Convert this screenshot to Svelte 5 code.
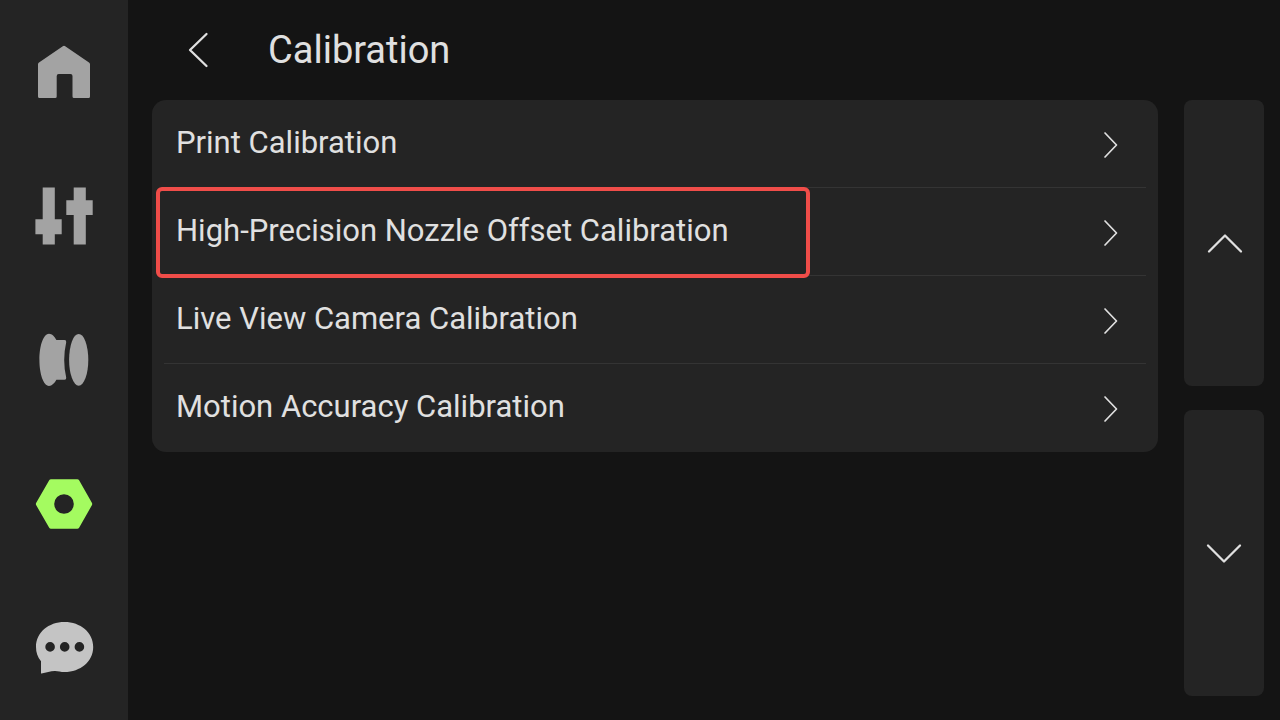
<script lang="ts">
  type Tab = 'home' | 'control' | 'filament' | 'settings' | 'assistant';

  const tabs: { id: Tab; label: string }[] = [
    { id: 'home', label: 'Home' },
    { id: 'control', label: 'Control' },
    { id: 'filament', label: 'Filament' },
    { id: 'settings', label: 'Settings' },
    { id: 'assistant', label: 'Assistant' }
  ];

  const items = [
    'Print Calibration',
    'High-Precision Nozzle Offset Calibration',
    'Live View Camera Calibration',
    'Motion Accuracy Calibration'
  ];

  let activeTab = $state<Tab>('settings');
  let selected = $state(1);
  let list: HTMLElement;

  function scrollList(direction: number) {
    list.scrollBy({ top: direction * 88, behavior: 'smooth' });
  }
</script>

<div class="screen">
  <nav class="sidebar">
    {#each tabs as tab}
      <button
        class="tab {tab.id}"
        class:active={activeTab === tab.id}
        aria-label={tab.label}
        onclick={() => (activeTab = tab.id)}
      >
        <svg viewBox="0 0 64 64" width="64" height="64" fill="currentColor">
          {#if tab.id === 'home'}
            <path d="M30.8 6.2Q32 5.3 33.2 6.2L57 22.6Q58 23.3 58 24.5V56.500Q58 58 56.500 58H42Q40.5 58 40.5 56.500V36Q40.5 34 38.5 34H26.7Q24.7 34 24.7 36V56.500Q24.7 58 23.200 58H7.500Q6 58 6 56.500V24.5Q6 23.3 7 22.6Z" />
          {:else if tab.id === 'control'}
            <path d="M10.7 3.4H22.8V35.2H29.7V50.2H22.8V60.6H10.7V50.2H3.4V35.2H10.7Z" />
            <path d="M41.7 3.4H53.8V16.2H60.7V31H53.8V60.6H41.7V31H34.3V16.2H41.7Z" />
          {:else if tab.id === 'filament'}
            <path d="M17 5.7C20 5.7 22.5 8.5 24.4 12H32.5Q34.6 12 34.2 14.2Q30.2 31.8 34.2 49.6Q34.6 51.8 32.5 51.8H24.4C22.5 55.2 20 57.9 17 57.9C11.5 57.9 7.4 46 7.4 31.8C7.4 17.6 11.5 5.7 17 5.7Z" />
            <ellipse cx="46.7" cy="31.8" rx="9.6" ry="25.9" />
          {:else if tab.id === 'settings'}
            <path
              fill-rule="evenodd"
              d="M19 7.2H45.3Q46.5 7.2 47.1 8.2L60 31Q60.4 32 60 33L47.1 55.8Q46.5 56.8 45.3 56.8H19Q17.8 56.8 17.2 55.8L4.1 33Q3.6 32 4.1 31L17.2 8.2Q17.8 7.2 19 7.2ZM32 22.2A9.8 9.8 0 1 0 32 41.8A9.8 9.8 0 1 0 32 22.2Z"
            />
          {:else}
            <path
              fill-rule="evenodd"
              d="M32.5 6C48.5 6 61.2 16.5 61.2 31C61.2 45.5 48.5 56 32.5 56C28.5 56 26 54.8 22.7 54.9C18.5 55 14 56.5 9.5 57.6Q9 57.7 9 57.2V45.3C5.5 41 4 36.5 4 31C4 16.5 16.5 6 32.5 6ZM18.1 26.1A4.8 4.8 0 1 0 18.1 35.7A4.8 4.8 0 1 0 18.1 26.1ZM32.7 26.1A4.8 4.8 0 1 0 32.7 35.7A4.8 4.8 0 1 0 32.7 26.1ZM47.4 26.1A4.8 4.8 0 1 0 47.4 35.7A4.8 4.8 0 1 0 47.4 26.1Z"
            />
          {/if}
        </svg>
      </button>
    {/each}
  </nav>

  <div class="page">
    <header>
      <button class="back" aria-label="Back">
        <svg viewBox="0 0 24 40" width="24" height="40">
          <path d="M20.5 4L4 20L20.5 36" />
        </svg>
      </button>
      <h1>Calibration</h1>
    </header>

    <div class="body">
      <main bind:this={list}>
        <ul class="card">
          {#each items as item, i}
            <li>
              <button class="row" onclick={() => (selected = i)}>
                <span>{item}</span>
                <svg viewBox="0 0 16 28" width="16" height="28">
                  <path d="M2 2L13.5 14L2 26" />
                </svg>
              </button>
              {#if selected === i}
                <div class="highlight"></div>
              {/if}
            </li>
          {/each}
        </ul>
      </main>

      <aside class="pager">
        <button aria-label="Scroll up" onclick={() => scrollList(-1)}>
          <svg viewBox="0 0 40 24" width="40" height="24">
            <path d="M5 20.5L21 4.5L37 20.5" />
          </svg>
        </button>
        <button aria-label="Scroll down" onclick={() => scrollList(1)}>
          <svg viewBox="0 0 40 24" width="40" height="24">
            <path d="M4 4.5L20 20.5L36 4.5" />
          </svg>
        </button>
      </aside>
    </div>
  </div>
</div>

<style>
  :global(body) {
    background: #141414;
  }

  .screen {
    display: flex;
    min-height: 100vh;
    background: #141414;
    color: #e0e0e0;
    font-family: Roboto, 'Liberation Sans', sans-serif;
  }

  button {
    margin: 0;
    padding: 0;
    border: none;
    background: none;
    color: inherit;
    font: inherit;
    cursor: pointer;
  }

  svg {
    display: block;
    flex: none;
  }

  .sidebar {
    display: flex;
    flex-direction: column;
    flex: none;
    width: 128px;
    background: #242424;
  }

  .tab {
    display: flex;
    flex: 1;
    align-items: center;
    justify-content: center;
    color: #a3a3a3;
  }

  .tab.assistant {
    color: #c4c4c4;
  }

  .tab.active {
    color: #a4fb60;
  }

  .page {
    display: flex;
    flex: 1;
    flex-direction: column;
    min-width: 0;
  }

  header {
    display: flex;
    align-items: center;
    gap: 58px;
    height: 100px;
    padding-left: 58px;
  }

  h1 {
    margin: 0;
    font-size: 38px;
    font-weight: 400;
    line-height: 44px;
  }

  .back path,
  .row path,
  .pager path {
    fill: none;
    stroke: currentColor;
    stroke-width: 2.3;
    stroke-linecap: round;
    stroke-linejoin: round;
  }

  .row path {
    stroke-width: 1.7;
  }

  .body {
    display: flex;
    flex: 1;
    gap: 26px;
    padding: 0 16px 24px 24px;
  }

  main {
    flex: 1;
    min-width: 0;
  }

  .card {
    margin: 0;
    padding: 0;
    list-style: none;
    background: #242424;
    border-radius: 14px;
  }

  li {
    position: relative;
    padding: 0 12px;
  }

  .row {
    display: flex;
    align-items: center;
    justify-content: space-between;
    box-sizing: border-box;
    width: 100%;
    height: 88px;
    padding: 2px 27px 0 12px;
    border-bottom: 1px solid #343434;
    font-size: 31px;
    line-height: 36px;
    text-align: left;
  }

  .row span {
    padding-bottom: 4px;
  }

  li:last-child .row {
    border-bottom-color: transparent;
  }

  .highlight {
    position: absolute;
    top: -1px;
    bottom: -2px;
    left: 4px;
    z-index: 1;
    box-sizing: border-box;
    width: 65%;
    border: 4px solid #f04d49;
    border-radius: 6px;
    pointer-events: none;
  }

  .pager {
    display: flex;
    flex: none;
    flex-direction: column;
    gap: 24px;
    width: 80px;
  }

  .pager button {
    display: flex;
    flex: 1;
    align-items: center;
    justify-content: center;
    background: #242424;
    border-radius: 8px;
  }
</style>
